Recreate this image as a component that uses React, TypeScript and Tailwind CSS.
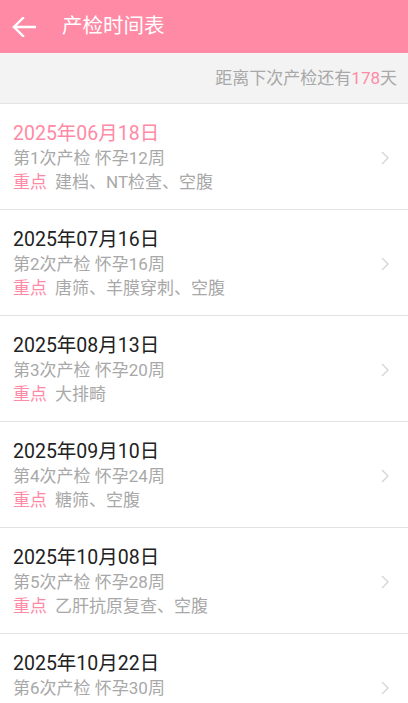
import React from "react";

const items = [
  { date: "2025年06月18日", n: 1, w: 12, key: "建档、NT检查、空腹", active: true },
  { date: "2025年07月16日", n: 2, w: 16, key: "唐筛、羊膜穿刺、空腹" },
  { date: "2025年08月13日", n: 3, w: 20, key: "大排畸" },
  { date: "2025年09月10日", n: 4, w: 24, key: "糖筛、空腹" },
  { date: "2025年10月08日", n: 5, w: 28, key: "乙肝抗原复查、空腹" },
  { date: "2025年10月22日", n: 6, w: 30, key: "" },
];

const font = { fontFamily: 'Roboto, "Noto Sans CJK SC", sans-serif' };

export default function App() {
  return (
    <div className="w-[408px] h-[703px] overflow-hidden bg-white" style={font}>
      <div className="h-[53px] bg-[#ff8aa5] flex items-center">
        <svg width="24" height="20" viewBox="0 0 24 20" className="ml-[12px]">
          <path d="M23 10H2M11 1L2 10l9 9" stroke="white" strokeWidth="2.4" fill="none" strokeLinecap="square" />
        </svg>
        <span className="ml-[26px] text-[20.5px] text-white">产检时间表</span>
      </div>
      <div className="h-[51px] bg-[#f3f3f3] border-b border-[#e4e4e4] flex items-center justify-end pr-[11px] pt-[1px] text-[17px] text-[#a8a8a8]">
        距离下次产检还有<span className="text-[#ff8aa5]">178</span>天
      </div>
      {items.map((it) => (
        <div key={it.n} className="h-[106px] border-b border-[#e2e2e2] flex items-start pl-[13px] pt-[17px] relative">
          <div className="flex flex-col">
            <div className={`text-[19.5px] leading-[25px] ${it.active ? "text-[#ff8aa5]" : "text-[#222]"}`}>{it.date}</div>
            <div className="text-[17px] leading-[24px] text-[#a8a8a8]">第{it.n}次产检 怀孕{it.w}周</div>
            {it.key && (
              <div className="text-[17px] leading-[24px] text-[#a8a8a8]">
                <span className="text-[#ff8aa5] mr-[8px]">重点</span>{it.key}
              </div>
            )}
          </div>
          <svg width="8" height="14" viewBox="0 0 8 14" className="absolute right-[19px] top-[47px]">
            <path d="M1 1l6 6-6 6" stroke="#d4d4d4" strokeWidth="1.3" fill="none" />
          </svg>
        </div>
      ))}
    </div>
  );
}
